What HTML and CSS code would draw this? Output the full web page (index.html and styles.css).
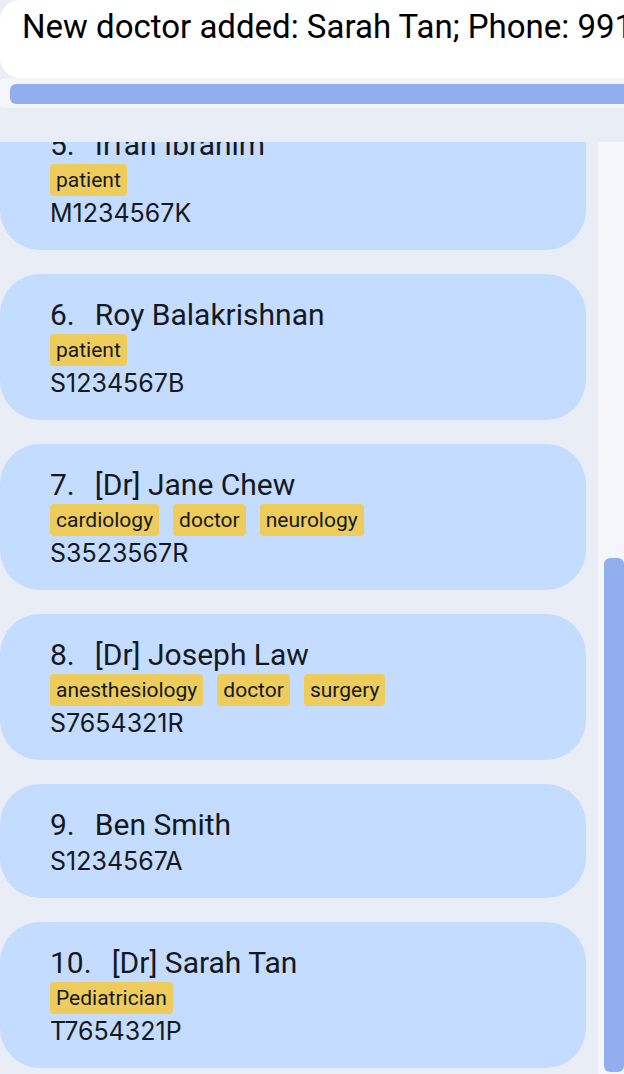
FILE: index.html
```html
<!DOCTYPE html>
<html lang="en">
<head>
<meta charset="utf-8">
<title>Contacts</title>
<link rel="stylesheet" href="styles.css">
</head>
<body>
<main class="app">
  <section class="result">
    <p class="result-text" role="status">New doctor added: Sarah Tan; Phone: 991</p>
    <div class="track-x"><div class="thumb"></div></div>
  </section>
  <section class="people">
    <ol class="list">
      <li class="card">
        <h2 class="name"><span>5.</span><span>Irfan Ibrahim</span></h2>
        <div class="tags"><span class="tag">patient</span></div>
        <p class="nric">M1234567K</p>
      </li>
      <li class="card">
        <h2 class="name"><span>6.</span><span>Roy Balakrishnan</span></h2>
        <div class="tags"><span class="tag">patient</span></div>
        <p class="nric">S1234567B</p>
      </li>
      <li class="card">
        <h2 class="name"><span>7.</span><span>[Dr] Jane Chew</span></h2>
        <div class="tags"><span class="tag">cardiology</span><span class="tag">doctor</span><span class="tag">neurology</span></div>
        <p class="nric">S3523567R</p>
      </li>
      <li class="card">
        <h2 class="name"><span>8.</span><span>[Dr] Joseph Law</span></h2>
        <div class="tags"><span class="tag">anesthesiology</span><span class="tag">doctor</span><span class="tag">surgery</span></div>
        <p class="nric">S7654321R</p>
      </li>
      <li class="card">
        <h2 class="name"><span>9.</span><span>Ben Smith</span></h2>
        <p class="nric">S1234567A</p>
      </li>
      <li class="card">
        <h2 class="name"><span>10.</span><span>[Dr] Sarah Tan</span></h2>
        <div class="tags"><span class="tag">Pediatrician</span></div>
        <p class="nric">T7654321P</p>
      </li>
    </ol>
    <div class="track-y"><div class="thumb"></div></div>
  </section>
</main>
</body>
</html>
```
FILE: styles.css
```css
* { box-sizing: border-box; margin: 0; padding: 0; }

body {
  background: #e8edf6;
  color: #14191f;
  font-family: Roboto, "Liberation Sans", sans-serif;
}

.app {
  display: flex;
  flex-direction: column;
  gap: 34px;
  height: 100vh;
  overflow: hidden;
}

.result-text {
  padding: 6px 0 30px 22px;
  overflow: hidden;
  border-radius: 20px 0 0 20px;
  background: #fff;
  color: #000;
  font-size: 33px;
  line-height: 42px;
  white-space: nowrap;
}

.track-x {
  padding: 6px 0 4px 10px;
  border-radius: 4px 0 0 4px;
  background: #f4f6fb;
}

.thumb {
  border-radius: 6px;
  background: #93aeef;
}

.track-x .thumb {
  height: 20px;
  border-radius: 6px 0 0 6px;
}

.people {
  display: flex;
  flex: 1;
  gap: 12px;
  min-height: 0;
}

/* Scrolled to the end: the last card rests on the bottom edge. */
.list {
  display: flex;
  flex: 1;
  flex-direction: column;
  justify-content: flex-end;
  gap: 24px;
  padding-bottom: 6px;
  overflow: hidden;
  list-style: none;
}

.card {
  flex: none;
  padding: 20px 50px;
  border-radius: 40px;
  background: #c4dcff;
}

.name {
  display: flex;
  gap: 20px;
  padding-top: 2px;
  font-size: 30px;
  font-weight: 400;
  line-height: 38px;
}

.tags {
  display: flex;
  gap: 14px;
}

.tag {
  padding: 0 6px;
  border-radius: 4px;
  background: #edcc5b;
  font-size: 21px;
  line-height: 32px;
}

.nric {
  font-family: Inter, "Liberation Sans", sans-serif;
  font-size: 25px;
  line-height: 34px;
}

.track-y {
  display: grid;
  grid-template-rows: 416fr 514fr;
  width: 26px;
  padding: 0 0 2px 6px;
  background: #f4f6fb;
}

.track-y .thumb { grid-row: 2; }
```
